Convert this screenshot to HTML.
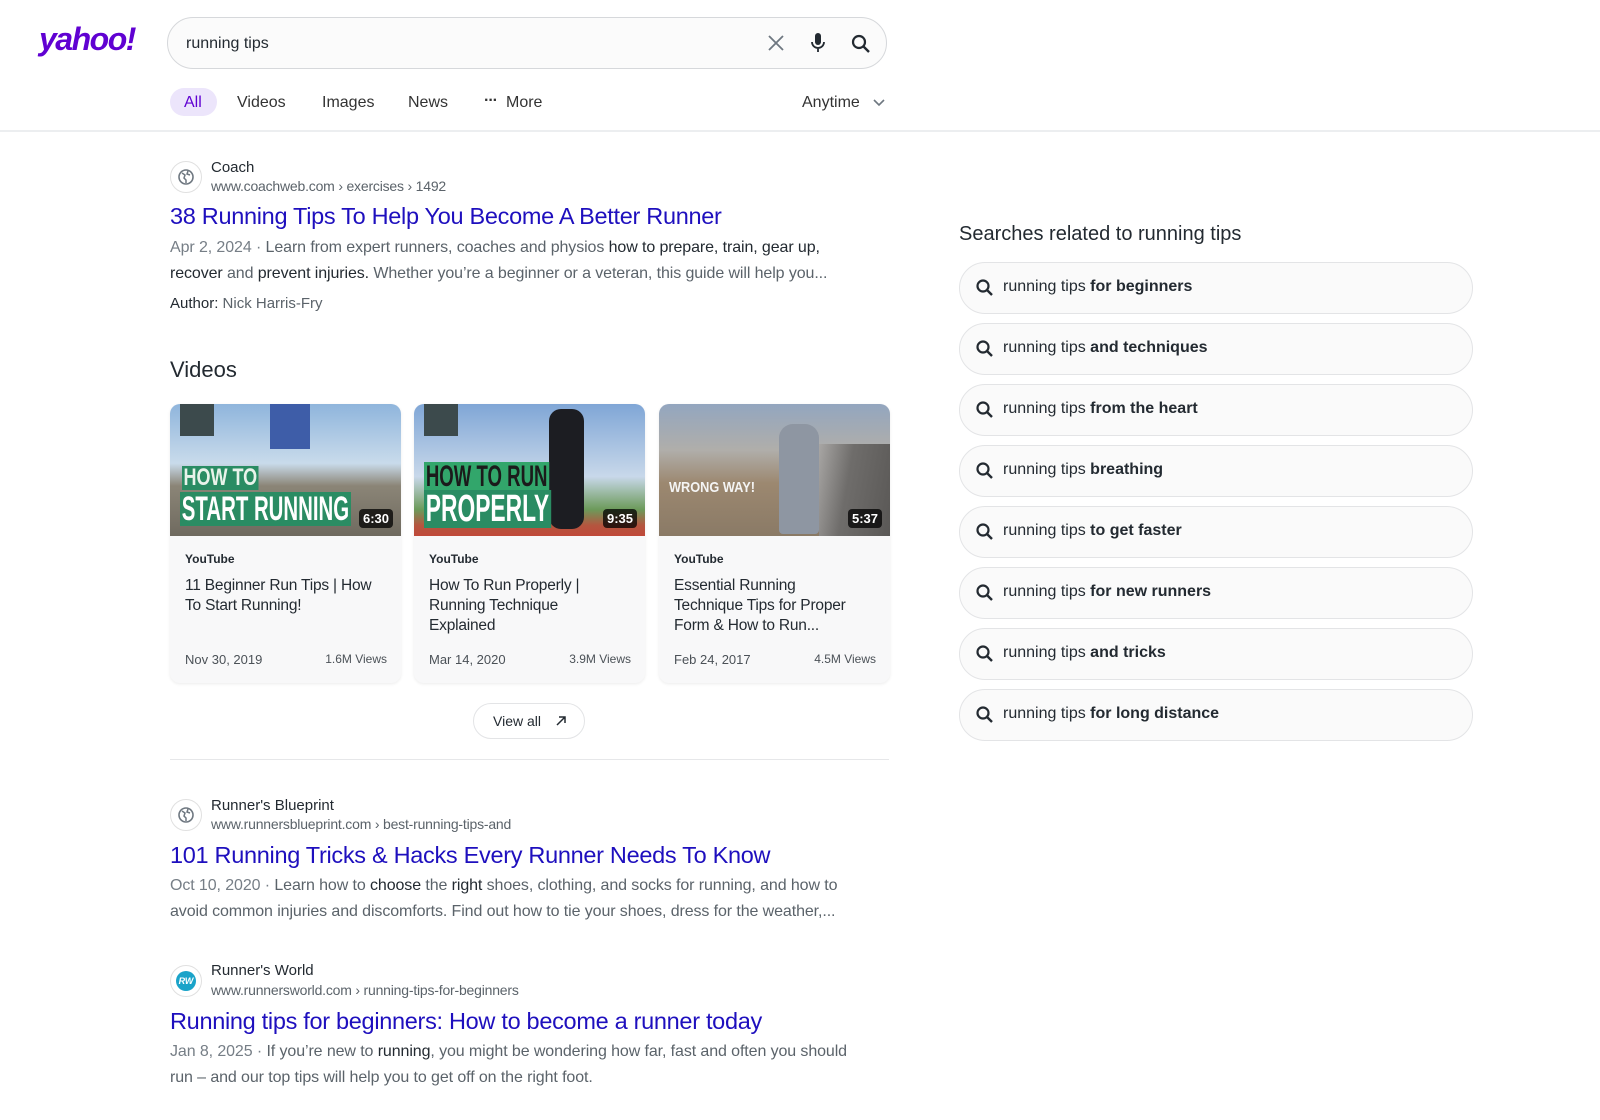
<!DOCTYPE html>
<html><head><meta charset="utf-8"><style>
*{margin:0;padding:0;box-sizing:border-box}
body{width:1600px;height:1120px;background:#fff;font-family:"Liberation Sans",sans-serif;color:#232a31;position:relative;overflow:hidden}
.a{position:absolute;white-space:nowrap}
.logo{left:39px;top:21px;font-size:32px;font-weight:bold;color:#6001d2;letter-spacing:-1.5px;font-style:italic}
.sb{left:167px;top:17px;width:720px;height:52px;border:1.5px solid #d6d8db;border-radius:26px;background:#fbfbfb}
.tab{top:94px;font-size:16px;color:#333}
.hr{height:1px;background:#e6e7e9}
.fav{width:32px;height:32px;border-radius:50%;border:1px solid #e0e0e0;background:#fff}
.name{font-size:15px;color:#232a31}
.url{font-size:14px;color:#5b636a;letter-spacing:-0.2px}
.title{font-size:23.5px;color:#1e0fbe;letter-spacing:-0.3px}
.snip{font-size:16px;color:#5b636a;line-height:26px;white-space:normal;width:700px;letter-spacing:-0.1px}
.snip b{font-weight:normal;color:#232a31}
.card{top:404px;width:231px;height:279px;border-radius:10px;background:#f8f8f9;overflow:hidden;box-shadow:0 1px 3px rgba(0,0,0,.08)}
.th{height:132px;position:relative;overflow:hidden}
.dur{position:absolute;right:8px;bottom:8px;background:rgba(0,0,0,.75);color:#fff;font-size:13px;font-weight:bold;padding:2px 4px;border-radius:4px}
.yt{position:absolute;left:15px;top:148px;font-size:12px;font-weight:bold;color:#232a31}
.vt{position:absolute;left:15px;top:172px;width:192px;font-size:15.5px;line-height:20px;color:#232a31;white-space:normal;letter-spacing:-0.2px}
.dt{position:absolute;left:15px;top:248px;font-size:13px;color:#4b5157}
.vw{position:absolute;right:14px;top:248px;font-size:12px;color:#4b5157}
.pill{left:959px;width:514px;height:52px;border:1.5px solid #e3e4e6;border-radius:26px;background:#fafafa}
.pill span{position:absolute;left:43px;top:15px;font-size:16px;color:#232a31}
.pill span b{font-weight:bold;color:#232a31}
.pill svg{position:absolute;left:15px;top:15px}
.ov{position:absolute;color:#fff;font-weight:bold;line-height:1;transform-origin:left top}
</style></head><body>
<div class="a logo">yahoo!</div>
<div class="a sb"></div>
<div class="a" style="left:186px;top:35px;font-size:16px;color:#232a31">running tips</div>
<svg class="a" style="left:767px;top:34px" width="18" height="18" viewBox="0 0 18 18"><path d="M2 2L16 16M16 2L2 16" stroke="#6e7780" stroke-width="1.8"/></svg>
<svg class="a" style="left:810px;top:32px" width="16" height="22" viewBox="0 0 16 22"><rect x="5" y="1" width="6" height="12" rx="3" fill="#232a31"/><path d="M2 10a6 6 0 0 0 12 0M8 16v4" stroke="#232a31" stroke-width="1.8" fill="none"/></svg>
<svg class="a" style="left:851px;top:34px" width="20" height="20" viewBox="0 0 20 20"><circle cx="8" cy="8" r="6" stroke="#232a31" stroke-width="2.2" fill="none"/><path d="M12.5 12.5L18 18" stroke="#232a31" stroke-width="2.4"/></svg>
<div class="a" style="left:170px;top:88px;width:47px;height:28px;border-radius:14px;background:#ece5fb"></div>
<div class="a tab" style="left:184px;color:#6001d2">All</div>
<div class="a tab" style="left:237px">Videos</div>
<div class="a tab" style="left:322px">Images</div>
<div class="a tab" style="left:408px">News</div>
<div class="a tab" style="left:484px;top:92px;font-weight:bold;letter-spacing:-1px">···</div>
<div class="a tab" style="left:506px">More</div>
<div class="a tab" style="left:802px">Anytime</div>
<svg class="a" style="left:873px;top:99px" width="12" height="8" viewBox="0 0 12 8"><path d="M1 1l5 5 5-5" stroke="#6e7780" stroke-width="1.6" fill="none"/></svg>
<div class="a hr" style="left:0;top:130px;width:1600px;height:2px;background:#eceef0"></div>

<div class="a fav" style="left:170px;top:161px"></div>
<svg class="a" style="left:177px;top:168px" width="18" height="18" viewBox="0 0 18 18"><circle cx="9" cy="9" r="7" stroke="#6e7780" stroke-width="1.6" fill="none"/><path d="M5 5l3 2-1 3 2 2v3M11 3l-1 3 3 1" stroke="#6e7780" stroke-width="1.5" fill="none"/></svg>
<div class="a name" style="left:211px;top:159px">Coach</div>
<div class="a url" style="left:211px;top:178px">www.coachweb.com › exercises › 1492</div>
<div class="a title" style="left:170px;top:203px">38 Running Tips To Help You Become A Better Runner</div>
<div class="a snip" style="left:170px;top:235px"><span style="color:#767e86">Apr 2, 2024 · </span>Learn from expert runners, coaches and physios <b>how to prepare, train, gear up, recover</b> and <b>prevent injuries.</b> Whether you’re a beginner or a veteran, this guide will help you...</div>
<div class="a" style="left:170px;top:295px;font-size:15px;color:#5b636a"><span style="color:#232a31">Author:</span> Nick Harris-Fry</div>

<div class="a" style="left:170px;top:357px;font-size:22px;color:#232a31">Videos</div>

<div class="a card" style="left:170px">
 <div class="th" style="background:linear-gradient(180deg,#8fb5dc 0%,#c9dbeb 45%,#8b8577 62%,#6f6a5f 100%)">
  <div style="position:absolute;left:10px;top:0;width:34px;height:32px;background:#3c4a4c"></div>
  <div style="position:absolute;left:100px;top:0;width:40px;height:45px;background:#3e5da8"></div>
  <div class="ov" style="left:12px;top:62px;font-size:24px;color:#e8f3ea;background:#2a8c63;padding:0 2px;transform:scaleX(.75)">HOW TO</div>
  <div class="ov" style="left:10px;top:88px;font-size:34px;background:#2a8c63;padding:0 3px;transform:scaleX(.6)">START RUNNING</div>
  <div class="dur">6:30</div>
 </div>
 <div class="yt">YouTube</div>
 <div class="vt">11 Beginner Run Tips | How To Start Running!</div>
 <div class="dt">Nov 30, 2019</div><div class="vw">1.6M Views</div>
</div>
<div class="a card" style="left:414px">
 <div class="th" style="background:linear-gradient(180deg,#7fa6d6 0%,#c8d8ea 55%,#6c9a5a 80%,#b5553f 92%,#c0493a 100%)">
  <div style="position:absolute;left:10px;top:0;width:34px;height:32px;background:#3c4a4c"></div>
  <div style="position:absolute;left:135px;top:5px;width:35px;height:120px;background:#1c1d22;border-radius:12px"></div>
  <div class="ov" style="left:10px;top:58px;font-size:30px;color:#1b1b1b;background:#32a66b;padding:0 3px;transform:scaleX(.62)">HOW TO RUN</div>
  <div class="ov" style="left:10px;top:86px;font-size:38px;background:#2a8c63;padding:0 3px;transform:scaleX(.6)">PROPERLY</div>
  <div class="dur">9:35</div>
 </div>
 <div class="yt">YouTube</div>
 <div class="vt">How To Run Properly | Running Technique Explained</div>
 <div class="dt">Mar 14, 2020</div><div class="vw">3.9M Views</div>
</div>
<div class="a card" style="left:659px">
 <div class="th" style="background:linear-gradient(180deg,#93a6bf 0%,#b0aeaa 35%,#9c8870 60%,#8a7a66 100%)">
  <div style="position:absolute;left:160px;top:40px;width:71px;height:92px;background:linear-gradient(100deg,#a8a6a4 0%,#6f6d6b 40%,#5a5856 100%)"></div>
  <div style="position:absolute;left:120px;top:20px;width:40px;height:110px;background:#8e96a2;border-radius:14px 14px 4px 4px"></div>
  <div class="ov" style="left:10px;top:76px;font-size:15px;color:#f4f4f4;transform:scaleX(.85)">WRONG WAY!</div>
  <div class="dur">5:37</div>
 </div>
 <div class="yt">YouTube</div>
 <div class="vt">Essential Running Technique Tips for Proper Form &amp; How to Run...</div>
 <div class="dt">Feb 24, 2017</div><div class="vw">4.5M Views</div>
</div>

<div class="a" style="left:473px;top:703px;width:112px;height:36px;border:1px solid #e3e4e6;border-radius:18px;background:#fff"></div>
<div class="a" style="left:493px;top:713px;font-size:14px;color:#232a31">View all</div>
<svg class="a" style="left:555px;top:715px" width="12" height="12" viewBox="0 0 12 12"><path d="M2 10L10 2M4 2h6v6" stroke="#232a31" stroke-width="1.5" fill="none"/></svg>
<div class="a hr" style="left:170px;top:759px;width:719px"></div>

<div class="a fav" style="left:170px;top:799px"></div>
<svg class="a" style="left:177px;top:806px" width="18" height="18" viewBox="0 0 18 18"><circle cx="9" cy="9" r="7" stroke="#6e7780" stroke-width="1.6" fill="none"/><path d="M5 5l3 2-1 3 2 2v3M11 3l-1 3 3 1" stroke="#6e7780" stroke-width="1.5" fill="none"/></svg>
<div class="a name" style="left:211px;top:797px">Runner's Blueprint</div>
<div class="a url" style="left:211px;top:816px">www.runnersblueprint.com › best-running-tips-and</div>
<div class="a title" style="left:170px;top:842px">101 Running Tricks &amp; Hacks Every Runner Needs To Know</div>
<div class="a snip" style="left:170px;top:873px"><span style="color:#767e86">Oct 10, 2020 · </span>Learn how to <b>choose</b> the <b>right</b> shoes, clothing, and socks for running, and how to avoid common injuries and discomforts. Find out how to tie your shoes, dress for the weather,...</div>

<div class="a fav" style="left:170px;top:965px"></div>
<div class="a" style="left:176px;top:971px;width:20px;height:20px;border-radius:50%;background:#1aa3c9;color:#fff;font-size:9px;font-weight:bold;text-align:center;line-height:20px;font-style:italic">RW</div>
<div class="a name" style="left:211px;top:962px">Runner's World</div>
<div class="a url" style="left:211px;top:982px">www.runnersworld.com › running-tips-for-beginners</div>
<div class="a title" style="left:170px;top:1008px">Running tips for beginners: How to become a runner today</div>
<div class="a snip" style="left:170px;top:1039px"><span style="color:#767e86">Jan 8, 2025 · </span>If you’re new to <b>running</b>, you might be wondering how far, fast and often you should<br>run – and our top tips will help you to get off on the right foot.</div>

<div class="a" style="left:959px;top:223px;font-size:20px;color:#232a31">Searches related to running tips</div>
<div class="a pill" style="top:262px"><svg width="20" height="20" viewBox="0 0 20 20"><circle cx="8" cy="8" r="5.5" stroke="#232a31" stroke-width="2.2" fill="none"/><path d="M12 12l5 5" stroke="#232a31" stroke-width="2.4"/></svg><span>running tips <b>for beginners</b></span></div>
<div class="a pill" style="top:323px"><svg width="20" height="20" viewBox="0 0 20 20"><circle cx="8" cy="8" r="5.5" stroke="#232a31" stroke-width="2.2" fill="none"/><path d="M12 12l5 5" stroke="#232a31" stroke-width="2.4"/></svg><span>running tips <b>and techniques</b></span></div>
<div class="a pill" style="top:384px"><svg width="20" height="20" viewBox="0 0 20 20"><circle cx="8" cy="8" r="5.5" stroke="#232a31" stroke-width="2.2" fill="none"/><path d="M12 12l5 5" stroke="#232a31" stroke-width="2.4"/></svg><span>running tips <b>from the heart</b></span></div>
<div class="a pill" style="top:445px"><svg width="20" height="20" viewBox="0 0 20 20"><circle cx="8" cy="8" r="5.5" stroke="#232a31" stroke-width="2.2" fill="none"/><path d="M12 12l5 5" stroke="#232a31" stroke-width="2.4"/></svg><span>running tips <b>breathing</b></span></div>
<div class="a pill" style="top:506px"><svg width="20" height="20" viewBox="0 0 20 20"><circle cx="8" cy="8" r="5.5" stroke="#232a31" stroke-width="2.2" fill="none"/><path d="M12 12l5 5" stroke="#232a31" stroke-width="2.4"/></svg><span>running tips <b>to get faster</b></span></div>
<div class="a pill" style="top:567px"><svg width="20" height="20" viewBox="0 0 20 20"><circle cx="8" cy="8" r="5.5" stroke="#232a31" stroke-width="2.2" fill="none"/><path d="M12 12l5 5" stroke="#232a31" stroke-width="2.4"/></svg><span>running tips <b>for new runners</b></span></div>
<div class="a pill" style="top:628px"><svg width="20" height="20" viewBox="0 0 20 20"><circle cx="8" cy="8" r="5.5" stroke="#232a31" stroke-width="2.2" fill="none"/><path d="M12 12l5 5" stroke="#232a31" stroke-width="2.4"/></svg><span>running tips <b>and tricks</b></span></div>
<div class="a pill" style="top:689px"><svg width="20" height="20" viewBox="0 0 20 20"><circle cx="8" cy="8" r="5.5" stroke="#232a31" stroke-width="2.2" fill="none"/><path d="M12 12l5 5" stroke="#232a31" stroke-width="2.4"/></svg><span>running tips <b>for long distance</b></span></div>
</body></html>
